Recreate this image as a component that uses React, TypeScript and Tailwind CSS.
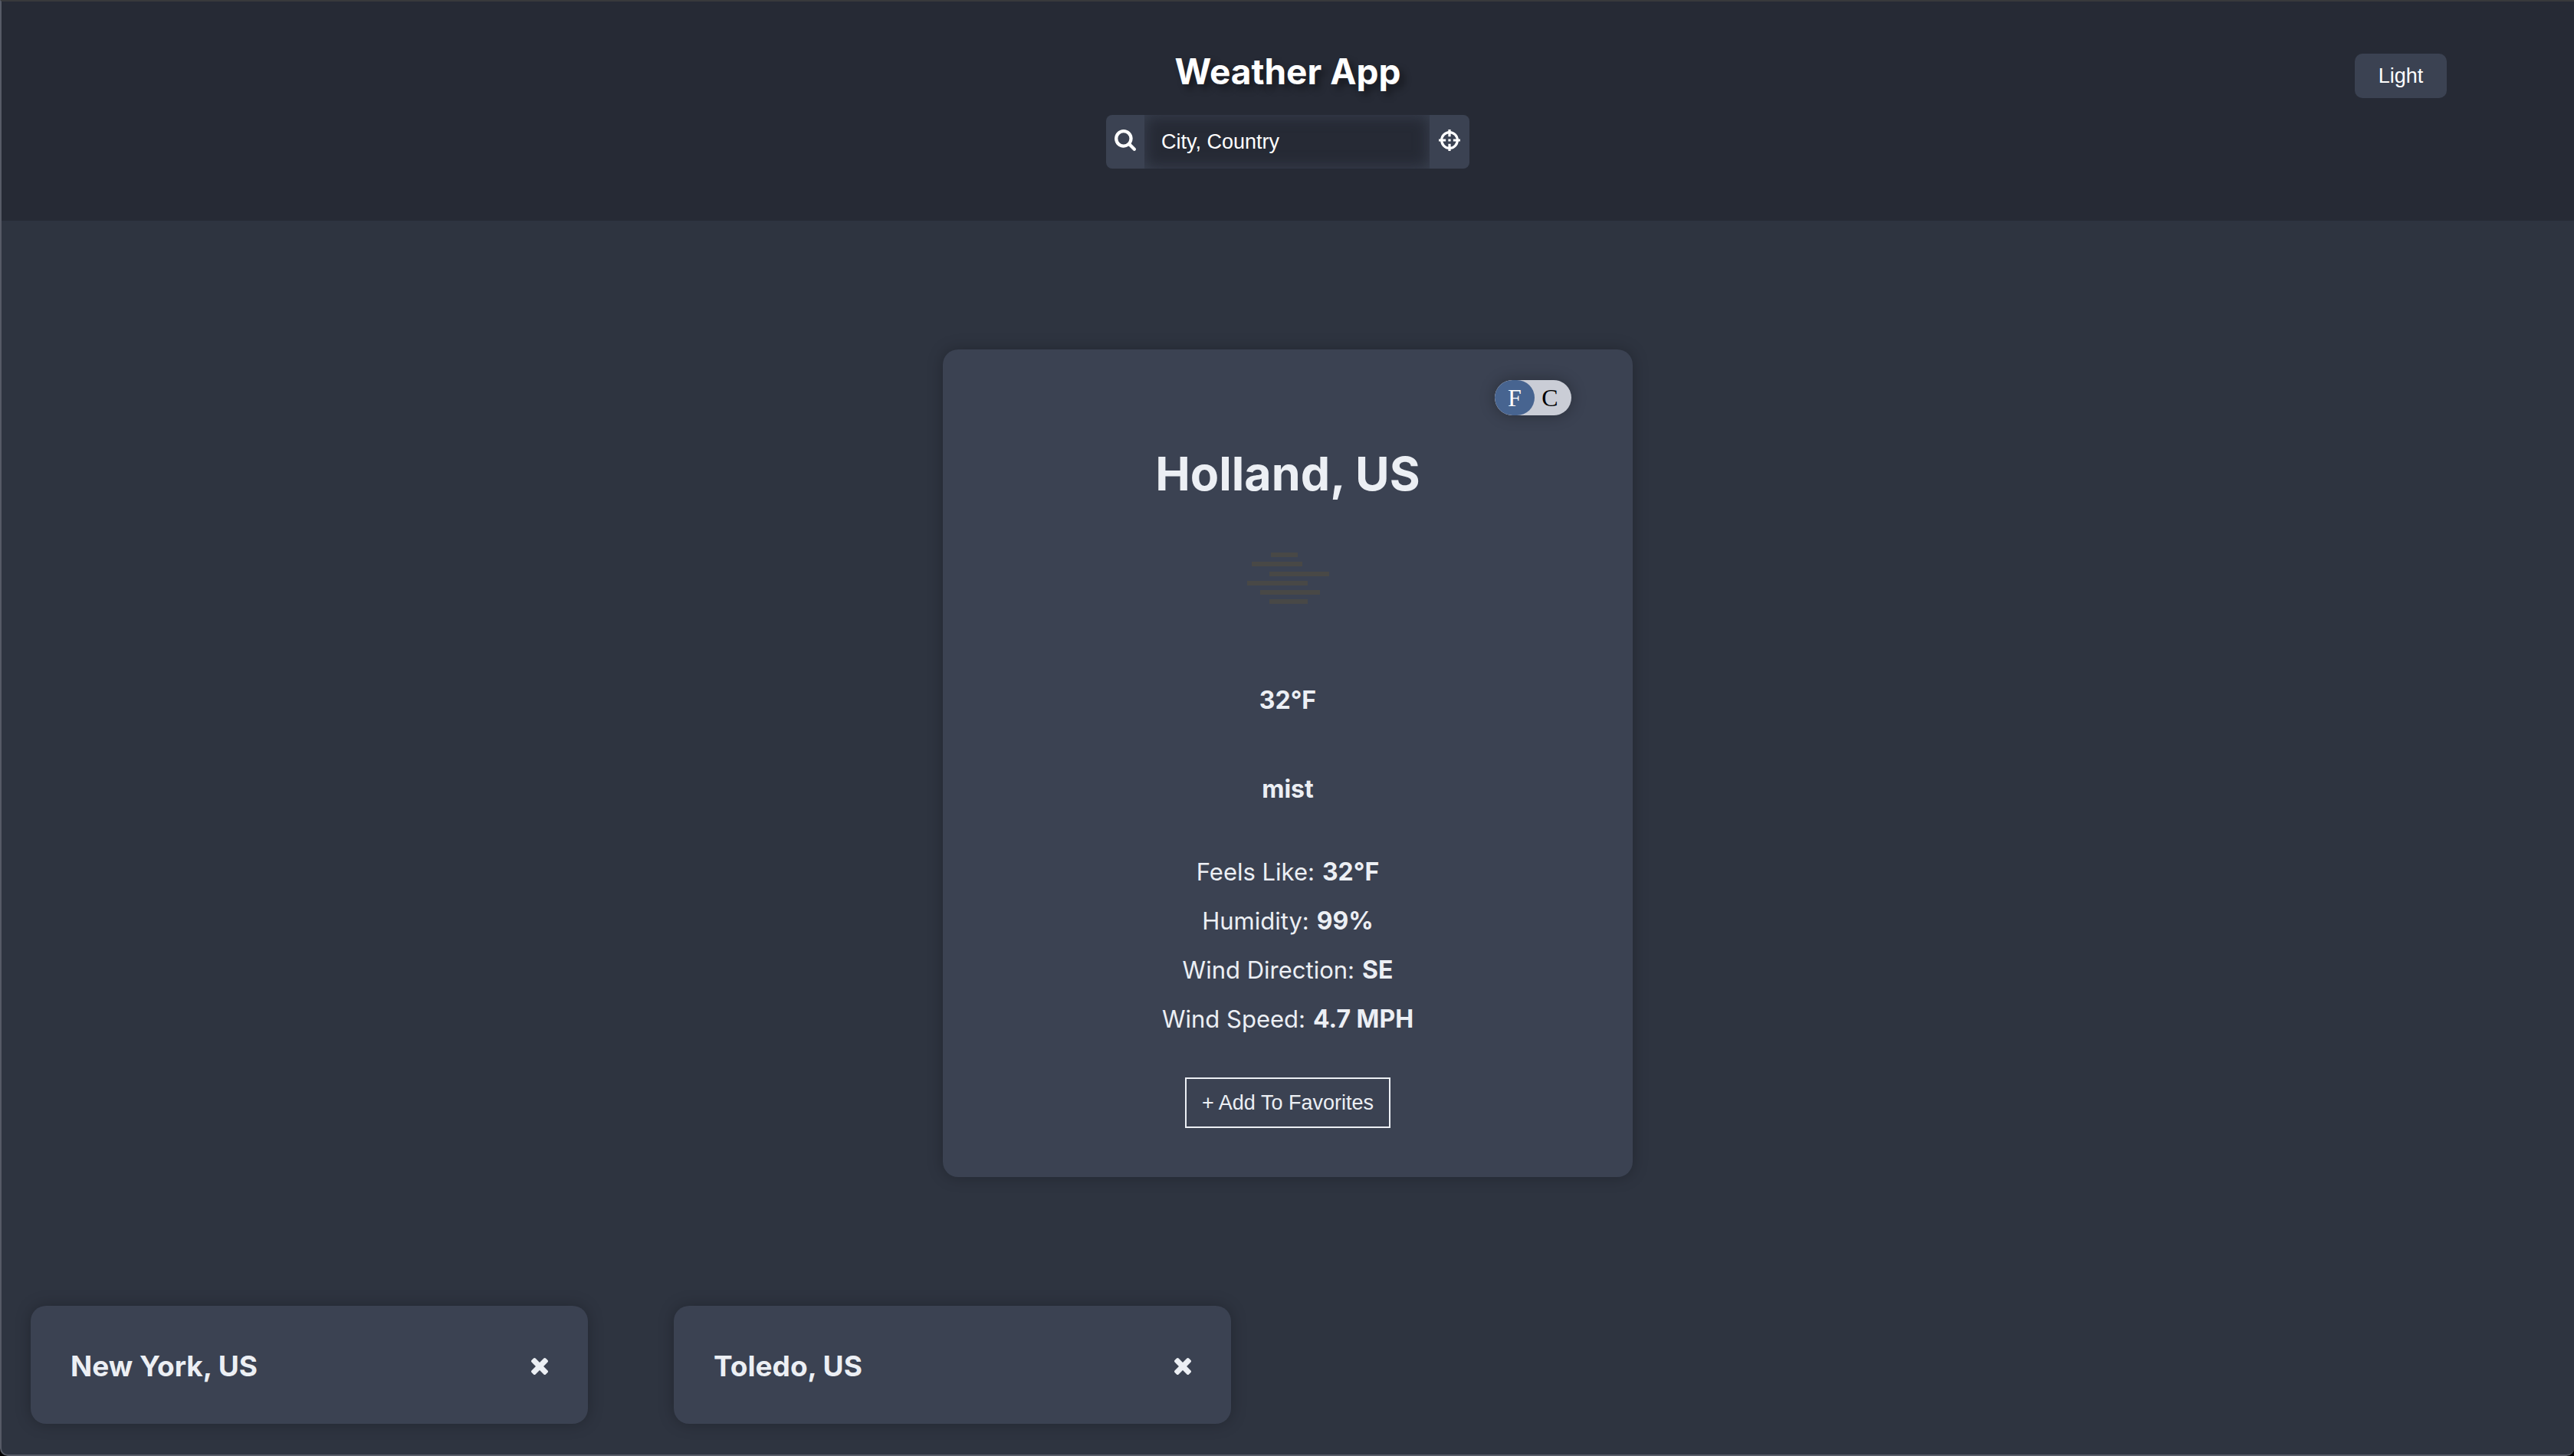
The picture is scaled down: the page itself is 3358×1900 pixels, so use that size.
import { useState } from "react";

const details = [
  { label: "Feels Like", value: "32°F" },
  { label: "Humidity", value: "99%" },
  { label: "Wind Direction", value: "SE" },
  { label: "Wind Speed", value: "4.7 MPH" },
];

const favorites = ["New York, US", "Toledo, US"];

function SearchIcon() {
  return (
    <svg viewBox="64 128 1664 1664" className="size-7" fill="currentColor" aria-hidden="true">
      <path d="M1216 832q0-185-131.5-316.5t-316.5-131.5-316.5 131.5-131.5 316.5 131.5 316.5 316.5 131.5 316.5-131.5 131.5-316.5zm512 832q0 52-38 90t-90 38q-54 0-90-38l-343-342q-179 124-399 124-143 0-273.5-55.5t-225-150-150-225-55.5-273.5 55.5-273.5 150-225 225-150 273.5-55.5 273.5 55.5 225 150 150 225 55.5 273.5q0 220-124 399l343 343q37 37 37 90z" />
    </svg>
  );
}

function CrosshairIcon() {
  return (
    <svg viewBox="0 0 26 26" className="size-7" fill="none" stroke="currentColor" strokeWidth="3" aria-hidden="true">
      <circle cx="13" cy="13" r="9.6" />
      <path d="M13 0v8.5M13 17.5v8.5M0 13h8.5M17.5 13h8.5" />
      <path d="M11.5 13h3" />
    </svg>
  );
}

function CloseIcon() {
  return (
    <svg viewBox="302 366 1188 1188" className="size-[22px]" fill="currentColor" aria-hidden="true">
      <path d="M1490 1322q0 40-28 68l-136 136q-28 28-68 28t-68-28l-294-294-294 294q-28 28-68 28t-68-28l-136-136q-28-28-28-68t28-68l294-294-294-294q-28-28-28-68t28-68l136-136q28-28 68-28t68 28l294 294 294-294q28-28 68-28t68 28l136 136q28 28 28 68t-28 68l-294 294 294 294q28 28 28 68z" />
    </svg>
  );
}

function MistIcon() {
  return (
    <svg viewBox="0 0 200 200" className="mt-1 size-[200px]" stroke="#484846" strokeWidth="6" aria-label="mist" role="img">
      <path d="M78 64h35M53 76h66M76 89h78M47 101h79M64 113h78M76 125h50" />
    </svg>
  );
}

export default function App() {
  const [query, setQuery] = useState("");
  const [unit, setUnit] = useState("F");

  return (
    <div className="bg-black">
      <div className="flex min-h-screen flex-col overflow-hidden rounded-b-[10px] border-t-2 border-b-2 border-l-2 border-[#565a66] border-t-[#38393c] bg-[#2e3440] font-[Inter,sans-serif] text-[#eceff4]">
        <header className="grid h-[286px] grid-cols-[1fr_auto_1fr] items-start bg-[#262a35] pt-[62px] text-white">
          <div />
          <div className="flex flex-col items-center gap-7">
            <h1 className="text-[46px] leading-[58px] font-bold [text-shadow:6px_6px_10px_rgba(0,0,0,0.4)]">Weather App</h1>
            <form
              className="flex h-[70px] w-[474px] overflow-hidden rounded-lg font-['Liberation_Sans',sans-serif] text-[27px]"
              onSubmit={(e) => e.preventDefault()}
            >
              <button type="submit" aria-label="Search" className="flex w-[50px] items-center justify-center bg-[#3b4252] pb-1">
                <SearchIcon />
              </button>
              <input
                aria-label="City, Country"
                placeholder="City, Country"
                value={query}
                onChange={(e) => setQuery(e.target.value)}
                className="min-w-0 flex-1 px-[22px] shadow-[inset_0_0_20px_#3b4252] outline-none placeholder:text-white"
              />
              <button type="button" aria-label="Use my location" className="flex w-[52px] items-center justify-center bg-[#3b4252] pb-1">
                <CrosshairIcon />
              </button>
            </form>
          </div>
          <button
            type="button"
            className="mt-1.5 mr-[166px] h-[58px] w-[120px] justify-self-end rounded-[10px] bg-[#3b4252] font-['Liberation_Sans',sans-serif] text-[27px]"
          >
            Light
          </button>
        </header>

        <main className="flex flex-1 flex-col">
          <section className="mx-auto mt-42 flex w-full max-w-[900px] flex-col items-center rounded-[20px] bg-[#3b4252] px-20 pt-10 pb-16 shadow-[0_0_20px_rgba(0,0,0,0.25)]">
            <div className="flex h-[46px] w-[100px] self-end overflow-hidden rounded-full bg-[#cacdd6] font-['Liberation_Serif',serif] text-[32px] shadow-[0_0_20px_rgba(0,0,0,0.3)]">
              <button
                type="button"
                aria-pressed={unit === "F"}
                onClick={() => setUnit("F")}
                className="w-[52px] rounded-full bg-[#476490] leading-[46px] text-white"
              >
                F
              </button>
              <button
                type="button"
                aria-pressed={unit === "C"}
                onClick={() => setUnit("C")}
                className="flex-1 pr-2 leading-[46px] text-black"
              >
                C
              </button>
            </div>
            <h2 className="mt-[38px] text-[61px] leading-[76px] font-bold">Holland, US</h2>
            <MistIcon />
            <p className="mt-[34px] text-[32px] leading-10 font-bold">32°F</p>
            <p className="mt-19 text-[32px] leading-10 font-bold">mist</p>
            <dl className="mt-14 text-center text-[32px] leading-16">
              {details.map((d) => (
                <div key={d.label} className="flex items-baseline justify-center gap-2.5">
                  <dt className="text-[31px]">{d.label}:</dt>
                  <dd className="font-bold">{d.value}</dd>
                </div>
              ))}
            </dl>
            <button
              type="button"
              className="mt-11 h-[66px] w-[268px] border-2 border-[#eceff4] font-['Liberation_Sans',sans-serif] text-[27px] whitespace-nowrap"
            >
              + Add To Favorites
            </button>
          </section>

          <ul className="mt-auto grid grid-cols-4 pb-10">
            {favorites.map((city) => (
              <li
                key={city}
                className="mr-[74px] ml-[38px] flex h-[154px] items-center justify-between rounded-[20px] bg-[#3b4252] pr-[52px] pl-[52px] shadow-[0_0_20px_rgba(0,0,0,0.25)]"
              >
                <h3 className="pt-1 text-[37px] leading-12 font-bold">{city}</h3>
                <button type="button" aria-label={"Remove " + city} className="pt-1">
                  <CloseIcon />
                </button>
              </li>
            ))}
          </ul>
        </main>
      </div>
    </div>
  );
}
